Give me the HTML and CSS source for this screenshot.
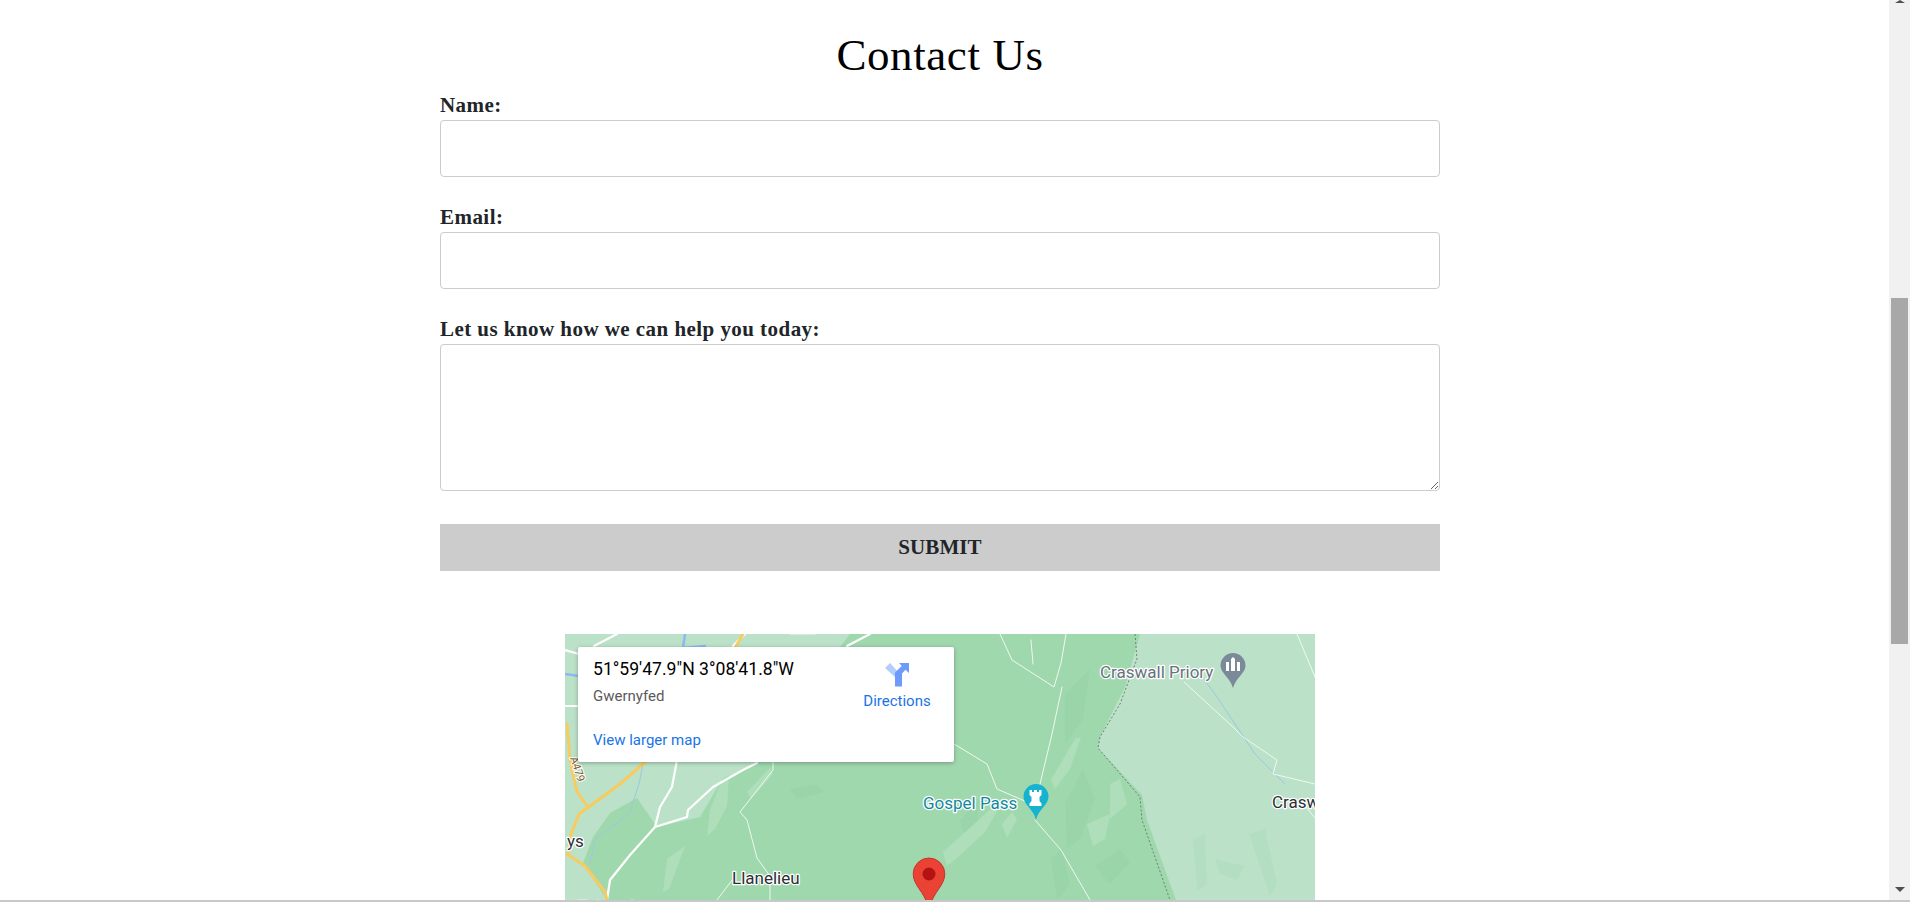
FILE: index.html
```html
<!DOCTYPE html>
<html lang="en">
<head>
<meta charset="utf-8">
<title>Contact Us</title>
<link rel="stylesheet" href="styles.css">
</head>
<body>
<div class="viewport">
  <main class="page">
    <h1 class="title">Contact Us</h1>
    <form class="form">
      <label class="label" for="name">Name:</label>
      <input class="field" id="name" type="text">
      <label class="label" for="email">Email:</label>
      <input class="field" id="email" type="email">
      <label class="label" for="msg">Let us know how we can help you today:</label>
      <textarea class="field area" id="msg"></textarea>
      <button class="submit" type="button">SUBMIT</button>
    </form>
    <section class="map">
      <svg class="map-art" viewBox="0 0 750 266" width="750" height="266" aria-hidden="true">
        <rect class="land" width="750" height="266"/>
        <path class="forest" d="M285 0 L575 0 L560 53 L535 103 L533 114 L577 161 L582 186 L611 266 L42 266 L18 229 L28 203 L45 179 L72 164 L92 193 L135 183 L155 149 L192 129 L240 60 Z"/>
        <!-- darker ridge patches -->
        <path class="shade" d="M290 30 L305 24 L310 62 L298 85 Z"/>
        <path class="shade" d="M500 60 L525 35 L518 85 L500 110 Z"/>
        <path class="shade" d="M500 170 L518 135 L530 165 L515 205 L502 215 Z"/>
        <path class="shade" d="M225 155 L250 150 L260 158 L232 165 Z"/>
        <path class="shade" d="M486 225 L497 214 L505 250 L492 266 Z"/>
        <path class="shade" d="M530 232 L555 215 L565 228 L545 250 Z"/>
        <path class="shade" d="M395 186 L415 165 L412 190 L400 202 Z"/>
        <path class="shade-light" d="M628 205 L640 200 L642 250 L632 258 Z"/>
        <path class="shade-light" d="M684 200 L700 195 L712 250 L705 262 Z"/>
        <path class="shade-light" d="M650 225 L680 232 L672 246 L655 240 Z"/>
        <!-- pale ridge streaks -->
        <path class="pale" d="M378 218 L417 183 L430 170 L434 174 L420 198 L392 224 L382 232 Z"/>
        <path class="pale" d="M486 146 L510 105 L516 103 L505 135 L490 155 Z"/>
        <path class="pale" d="M545 150 L555 145 L562 170 L545 185 Z"/>
        <path class="pale" d="M437 190 L447 178 L452 185 L442 204 Z"/>
        <path class="pale" d="M522 190 L545 180 L540 205 L528 212 Z"/>
        <path class="pale" d="M145 176 L157 145 L164 140 L162 172 L150 195 L142 202 Z"/>
        <path class="pale" d="M102 225 L120 212 L114 228 L104 255 L98 258 Z"/>
        <path class="pale" d="M182 158 L205 134 L208 140 L186 165 Z"/>
        <!-- rivers -->
        <path class="river" d="M120 0 L118 14 L140 12"/>
        <path class="river" d="M0 40 L14 42"/>
        <path class="river-thin" d="M78 130 L74 150 L64 180 L30 205 L25 230"/>
        <path class="river-thin" d="M635 40 L650 60 L690 120 L720 150"/>
        <!-- white roads -->
        <path class="road" d="M112 126 L107 153 L95 173 L90 193 L65 221 L45 246 L42 266"/>
        <path class="road" d="M90 193 L122 183 L123 176 L148 153 L178 136 L192 129"/>
        <path class="road" d="M29 12 L52 0"/>
        <path class="road" d="M0 16 L14 20"/>
        <path class="road" d="M0 72 L14 72"/>
        <path class="road" d="M168 12 L180 0"/>
        <path class="road" d="M282 12 L305 0"/>
        <path class="road-thin" d="M208 126 L208 136 L175 178 L182 186 L192 224 L205 242 L205 266"/>
        <path class="road-thin" d="M168 245 L152 266"/>
        <path class="road-thin" d="M435 0 L447 26 L489 53 L496 29 L501 0"/>
        <path class="road-thin" d="M466 6 L468 30"/>
        <path class="road-thin" d="M497 53 L487 100 L475 150"/>
        <path class="road-thin" d="M389 110 L422 130 L432 155 L462 168"/>
        <path class="road-thin" d="M470 186 L496 216 L525 266"/>
        <path class="road-thin" d="M619 48 L668 93 L678 103 L712 126 L708 140 L750 150"/>
        <path class="road-thin" d="M732 0 L750 43"/>
        <path class="road-thin" d="M750 184 L737 168"/>
        <path class="road-thin" d="M225 0 L250 0"/>
        <!-- yellow roads -->
        <path class="yellow" d="M178 0 L170 14 L163 30"/>
        <path class="yellow" d="M2 90 L5 126 L12 158 L22 172"/>
        <path class="yellow" d="M80 128 L55 150 L25 172 L14 180 L6 200 L4 218"/>
        <path class="yellow" d="M2 220 L20 232 L40 258 L43 270"/>
        <!-- county border -->
        <path class="border" d="M570 0 L572 25 L555 70 L535 103 L533 114 L575 163 L577 186 L605 266"/>
        <!-- pins -->
        <path class="pin-gray" d="M668 19 a12.5 12.5 0 0 1 12.5 12.5 c0 8 -9 11 -12.5 22.5 c-3.500 -11.500 -12.500 -14.500 -12.500 -22.500 a12.500 12.500 0 0 1 12.500 -12.500 z"/>
        <path class="pin-glyph" d="M661 37 v-9 h3 v9 z M666 37 v-12 l2 -2 l2 2 v12 z M672 37 v-9 h3 v9 z"/>
        <path class="pin-teal" d="M471 150 a12.500 12.500 0 0 1 12.500 12.500 c0 9 -10 12 -12.500 23.500 c-2.500 -11.500 -12.500 -14.500 -12.500 -23.500 a12.500 12.500 0 0 1 12.500 -12.500 z"/>
        <path class="pin-glyph" d="M464.500 156 h2.500 v2 h2 v-2 h3 v2 h2 v-2 h2.500 v5 l-2 2 v4 l2 2.500 v2.500 h-12 v-2.500 l2 -2.500 v-4 l-2 -2 z"/>
        <path class="pin-red" d="M364 224 a15.800 15.800 0 0 1 15.800 15.800 c0 11.500 -10.500 17 -15.800 34 c-5.300 -17 -15.800 -22.500 -15.800 -34 a15.800 15.800 0 0 1 15.800 -15.800 z"/>
        <circle class="pin-red-dot" cx="364" cy="240" r="6.500"/>
        <!-- labels -->
        <text class="lbl lbl-gray" x="535" y="44">Craswall Priory</text>
        <text class="lbl lbl-teal" x="358" y="175">Gospel Pass</text>
        <text class="lbl" x="707" y="174">Craswall</text>
        <text class="lbl" x="167" y="250">Llanelieu</text>
        <text class="lbl" x="2" y="213">ys</text>
        <text class="lbl" x="12" y="279">Talgarth</text>
        <text class="lbl-road" transform="translate(5 124) rotate(72)">A479</text>
      </svg>
      <div class="card">
        <div class="card-main">
          <div class="coords">51°59'47.9"N 3°08'41.8"W</div>
          <div class="place">Gwernyfed</div>
          <a class="link larger" href="#">View larger map</a>
        </div>
        <a class="directions" href="#">
          <svg class="dir-icon" viewBox="0 0 24 24" width="24" height="24" aria-hidden="true">
            <path class="dir-light" d="M0 5 L5 0 L14 10 L10 14 Z"/>
            <path class="dir-dark" d="M14 0 H24 V10 L20.500 6.800 L17 10.500 V23.500 H10 V9.500 L16.800 3 Z"/>
          </svg>
          <span class="link">Directions</span>
        </a>
      </div>
    </section>
  </main>
  <aside class="scrollbar" aria-hidden="true">
    <span class="arrow-up"></span>
    <span class="thumb"></span>
    <span class="arrow-down"></span>
  </aside>
</div>
<div class="frame-line"></div>
</body>
</html>
```
FILE: styles.css
```css
* { box-sizing: border-box; }

html, body {
  margin: 0;
  height: 100%;
  overflow: hidden;
  background: #fff;
}

body {
  display: flex;
  flex-direction: column;
  font-family: "Liberation Serif", "Times New Roman", serif;
}

.viewport {
  flex: 1;
  min-height: 0;
  display: flex;
}

.page {
  flex: 1;
  min-width: 0;
  overflow: hidden;
  padding-right: 9px;
  display: flex;
  flex-direction: column;
  align-items: center;
}

.title {
  margin: 0;
  height: 97px;
  padding-top: 28px;
  font-size: 45px;
  line-height: 54px;
  font-weight: 400;
  color: #000;
  letter-spacing: 0.6px;
}

.form {
  width: 1000px;
  display: flex;
  flex-direction: column;
}

.label {
  height: 23px;
  font-size: 21px;
  line-height: 16px;
  font-weight: 700;
  color: #212529;
  letter-spacing: 0.45px;
}

.field {
  display: block;
  width: 100%;
  height: 57px;
  margin-bottom: 32px;
  padding: 6px 12px;
  border: 1px solid #ccc;
  border-radius: 4px;
  background: #fff;
  font: inherit;
}

.area {
  height: 147px;
  margin-bottom: 33px;
}

.submit {
  width: 100%;
  height: 47px;
  border: 0;
  padding: 0;
  background: #ccc;
  color: #212529;
  font-family: inherit;
  font-size: 21px;
  font-weight: 700;
  letter-spacing: 0.1px;
}

.map {
  position: relative;
  flex: none;
  width: 750px;
  height: 266px;
  margin-top: 63px;
  overflow: hidden;
}

.map-art { display: block; }

.land { fill: #bbe2c8; }
.forest { fill: #a0d8ae; }
.shade { fill: #9ad4a9; }
.shade-light { fill: #b4dec2; }
.pale { fill: #aedfba; }

.river, .river-thin, .road, .road-thin, .yellow, .border { fill: none; stroke-linejoin: round; stroke-linecap: round; }
.river { stroke: #8fb8f0; stroke-width: 2.5; }
.river-thin { stroke: #9cc8e0; stroke-width: 1; }
.road { stroke: #fff; stroke-width: 2.2; }
.road-thin { stroke: #eef8f1; stroke-width: 1; }
.yellow { stroke: #f9cb5f; stroke-width: 3; }
.border { stroke: #6f7f76; stroke-width: 1; stroke-dasharray: 2 2; stroke-linecap: butt; }

.pin-gray { fill: #7b8a99; }
.pin-teal { fill: #17b2cf; }
.pin-red { fill: #ea4335; stroke: #c5362a; stroke-width: 1; }
.pin-red-dot { fill: #b31412; }
.pin-glyph { fill: #fff; }

.lbl, .lbl-road {
  font-family: Roboto, "Liberation Sans", sans-serif;
  paint-order: stroke;
  stroke: #fff;
  stroke-linejoin: round;
}

.lbl {
  font-size: 17px;
  stroke-width: 2.5px;
  fill: #2b2f33;
}

.lbl-gray { fill: #66727c; }
.lbl-teal { fill: #12889e; }

.lbl-road {
  font-size: 11px;
  stroke-width: 2px;
  fill: #7a5a20;
}

.card {
  position: absolute;
  left: 13px;
  top: 13px;
  width: 376px;
  height: 115px;
  display: flex;
  justify-content: space-between;
  background: #fff;
  border-radius: 2px;
  box-shadow: 0 1px 4px rgba(0, 0, 0, 0.3);
  font-family: Roboto, "Liberation Sans", sans-serif;
}

.card-main {
  display: flex;
  flex-direction: column;
  padding: 12px 0 12px 15px;
}

.coords {
  font-size: 17.600px;
  line-height: 20px;
  color: #000;
}

.place {
  margin-top: 7px;
  font-size: 15px;
  line-height: 20px;
  color: #5b5b5b;
}

.link {
  color: #1a73e8;
  font-size: 15px;
  line-height: 20px;
  text-decoration: none;
  white-space: nowrap;
}

.larger { margin-top: auto; }

.directions {
  display: flex;
  flex-direction: column;
  align-items: center;
  gap: 4px;
  width: 66px;
  margin-right: 24px;
  padding-top: 16px;
  text-decoration: none;
}

.dir-light { fill: #b3cdfc; }
.dir-dark { fill: #6d9bfb; }

.scrollbar {
  flex: none;
  width: 21px;
  display: flex;
  flex-direction: column;
  align-items: center;
  background: #f1f1f1;
}

.arrow-up {
  width: 0;
  height: 0;
  border-left: 5px solid transparent;
  border-right: 5px solid transparent;
  border-bottom: 3px solid #505050;
}

.thumb {
  width: 17px;
  height: 346px;
  margin-top: 295px;
  background: #a8a8a8;
}

.arrow-down {
  width: 0;
  height: 0;
  margin-top: 243px;
  border-left: 5px solid transparent;
  border-right: 5px solid transparent;
  border-top: 5px solid #505050;
}

.frame-line {
  flex: none;
  height: 2px;
  background: #c8c8c8;
}
```
